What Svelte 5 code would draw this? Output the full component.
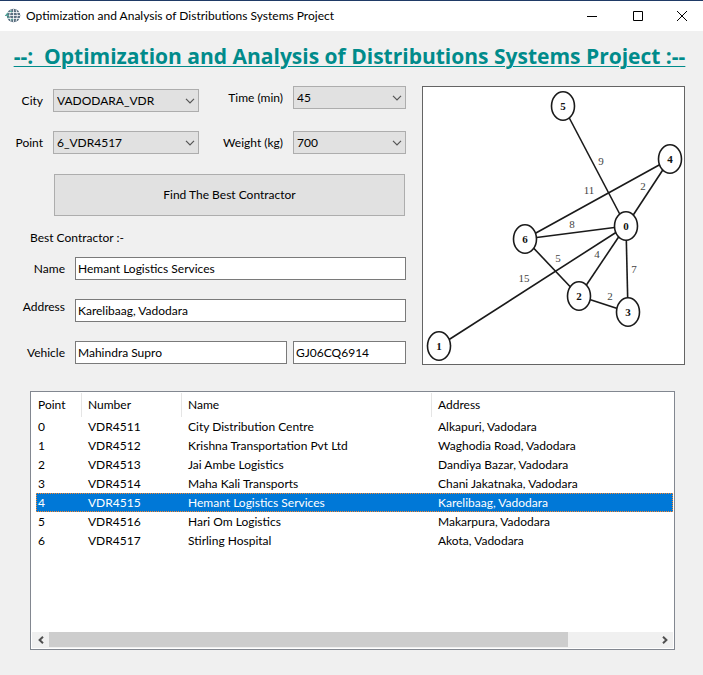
<script>
  const title = 'Optimization and Analysis of Distributions Systems Project';

  let city = $state('VADODARA_VDR');
  let point = $state('6_VDR4517');
  let time = $state('45');
  let weight = $state('700');
  let selected = $state(4);

  const points = [
    { number: 'VDR4511', name: 'City Distribution Centre', address: 'Alkapuri, Vadodara' },
    { number: 'VDR4512', name: 'Krishna Transportation Pvt Ltd', address: 'Waghodia Road, Vadodara' },
    { number: 'VDR4513', name: 'Jai Ambe Logistics', address: 'Dandiya Bazar, Vadodara' },
    { number: 'VDR4514', name: 'Maha Kali Transports', address: 'Chani Jakatnaka, Vadodara' },
    { number: 'VDR4515', name: 'Hemant Logistics Services', address: 'Karelibaag, Vadodara' },
    { number: 'VDR4516', name: 'Hari Om Logistics', address: 'Makarpura, Vadodara' },
    { number: 'VDR4517', name: 'Stirling Hospital', address: 'Akota, Vadodara' }
  ];

  // Node centres, indexed by point number
  const nodes = [
    [203, 139], [16, 259], [156, 209], [205, 225], [247, 72], [140, 19], [102, 152]
  ];

  // from, to, distance, label x, label y
  const edges = [
    [5, 0, 9, 178, 74],
    [4, 6, 11, 166, 103],
    [4, 0, 2, 220, 99],
    [6, 0, 8, 149, 137],
    [6, 2, 5, 135, 171],
    [0, 2, 4, 174, 167],
    [0, 1, 15, 101, 191],
    [2, 3, 2, 187, 209],
    [0, 3, 7, 211, 182]
  ];
</script>

{#snippet chevron()}
  <svg class="chevron" width="10" height="6" viewBox="0 0 10 6" aria-hidden="true">
    <path d="M1 0.8 L5 4.8 L9 0.8" fill="none" stroke="#555" stroke-width="1.2" />
  </svg>
{/snippet}

<div class="window">
  <header class="titlebar">
    <svg class="logo" width="16" height="16" viewBox="0 0 16 16" aria-hidden="true">
      <circle cx="8.5" cy="7.5" r="6.8" fill="#5b6f80" />
      <path d="M8.5 1v13M2 4.5h13M2 7.5h13M2 10.5h13M6 1.5q-3 6 0 12M11 1.5q3 6 0 12" fill="none" stroke="#fff" stroke-width="0.8" />
      <path d="M0 7.5h4M1 7l2-2M2.5 10l2-1M5 3l2 1M6 12l2-1" fill="none" stroke="#57a79b" stroke-width="1.1" />
    </svg>
    <span class="caption">{title}</span>
    <button class="ctl" aria-label="Minimize">
      <svg width="10" height="10" viewBox="0 0 10 10"><path d="M0 5.5h10" stroke="#000" /></svg>
    </button>
    <button class="ctl" aria-label="Maximize">
      <svg width="10" height="10" viewBox="0 0 10 10"><path d="M0.5 0.5h9v9h-9z" fill="none" stroke="#000" /></svg>
    </button>
    <button class="ctl" aria-label="Close">
      <svg width="10" height="10" viewBox="0 0 10 10"><path d="M0 0l10 10M10 0L0 10" stroke="#000" /></svg>
    </button>
  </header>

  <h1>--:&nbsp; {title} :--</h1>

  <main>
    <div class="top">
      <form onsubmit={(e) => e.preventDefault()}>
        <div class="choices">
          <div class="column main-column">
            <div class="field">
              <label for="city">City</label>
              <span class="select">
                <select id="city" bind:value={city}><option>VADODARA_VDR</option></select>
                {@render chevron()}
              </span>
            </div>
            <div class="field">
              <label for="point">Point</label>
              <span class="select">
                <select id="point" bind:value={point}>
                  {#each points as p, i}<option>{i}_{p.number}</option>{/each}
                </select>
                {@render chevron()}
              </span>
            </div>
          </div>
          <div class="column side-column">
            <div class="field">
              <label for="time">Time (min)</label>
              <span class="select">
                <select id="time" bind:value={time}><option>45</option></select>
                {@render chevron()}
              </span>
            </div>
            <div class="field">
              <label for="weight">Weight (kg)</label>
              <span class="select">
                <select id="weight" bind:value={weight}><option>700</option></select>
                {@render chevron()}
              </span>
            </div>
          </div>
        </div>

        <button class="find">Find The Best Contractor</button>

        <h2>Best Contractor :-</h2>
        <div class="results">
          <div class="result">
            <label for="name">Name</label>
            <input id="name" value="Hemant Logistics Services" />
          </div>
          <div class="result raised">
            <label for="address">Address</label>
            <input id="address" value="Karelibaag, Vadodara" />
          </div>
          <div class="result">
            <label for="vehicle">Vehicle</label>
            <input id="vehicle" value="Mahindra Supro" />
            <input class="plate" aria-label="Vehicle number" value="GJ06CQ6914" />
          </div>
        </div>
      </form>

      <div class="graph">
        <svg viewBox="0 0 261 277" role="img" aria-label="Distances between points">
          {#each edges as [from, to]}
            <line x1={nodes[from][0]} y1={nodes[from][1]} x2={nodes[to][0]} y2={nodes[to][1]} />
          {/each}
          {#each edges as [, , distance, x, y]}
            <text class="distance" {x} y={y + 4}>{distance}</text>
          {/each}
          {#each nodes as [x, y], i}
            <ellipse cx={x} cy={y} rx="11.5" ry="14.3" />
            <text class="node" {x} y={y + 4}>{i}</text>
          {/each}
        </svg>
      </div>
    </div>

    <div class="list">
      <table>
        <colgroup>
          <col class="c-point" /><col class="c-number" /><col class="c-name" /><col />
        </colgroup>
        <thead>
          <tr><th>Point</th><th>Number</th><th>Name</th><th>Address</th></tr>
        </thead>
        <tbody>
          {#each points as p, i}
            <tr class:selected={selected === i} onclick={() => (selected = i)}>
              <td>{i}</td><td>{p.number}</td><td>{p.name}</td><td>{p.address}</td>
            </tr>
          {/each}
        </tbody>
      </table>
      <div class="scrollbar">
        <button aria-label="Scroll left">
          <svg width="6" height="8" viewBox="0 0 6 8"><path d="M5 0.8L1.6 4L5 7.2" fill="none" stroke="#505050" stroke-width="2" /></svg>
        </button>
        <div class="track"><div class="thumb"></div></div>
        <button aria-label="Scroll right">
          <svg width="6" height="8" viewBox="0 0 6 8"><path d="M1 0.8L4.4 4L1 7.2" fill="none" stroke="#505050" stroke-width="2" /></svg>
        </button>
      </div>
    </div>
  </main>
</div>

<style>
  :global(body) {
    margin: 0;
    background: #f0f0f0;
  }

  .window {
    box-sizing: border-box;
    min-height: 100vh;
    display: flex;
    flex-direction: column;
    border-top: 1px solid #1f3a66;
    background: #f0f0f0;
    color: #000;
    font: 12px/16px Lato, 'Open Sans', sans-serif;
  }

  button,
  input,
  select {
    box-sizing: border-box;
    margin: 0;
    border-radius: 0;
    color: inherit;
    font: inherit;
  }

  .titlebar {
    display: flex;
    align-items: center;
    height: 30px;
    padding-left: 5px;
    background: #fff;
  }

  .caption {
    flex: 1;
    min-width: 0;
    margin-left: 5px;
    overflow: hidden;
    white-space: nowrap;
  }

  .ctl {
    display: flex;
    align-items: center;
    justify-content: center;
    width: 46px;
    height: 30px;
    padding: 0;
    border: 0;
    background: none;
  }

  .ctl:last-child {
    width: 42px;
  }

  h1 {
    margin: 9px 0 0;
    padding-right: 4px;
    color: #008b8b;
    font-family: 'Open Sans', sans-serif;
    font-size: 21px;
    font-weight: 700;
    line-height: 32px;
    text-align: center;
    text-decoration: underline;
    text-decoration-thickness: 1px;
    text-underline-offset: 2px;
    white-space: nowrap;
  }

  main {
    flex: 1;
    display: flex;
    flex-direction: column;
    padding: 14px 18px 25px 12px;
  }

  .top {
    display: grid;
    grid-template-columns: minmax(0, 1fr) 263px;
    gap: 16px;
  }

  .choices {
    display: flex;
  }

  .column {
    display: flex;
    flex-direction: column;
    justify-content: space-between;
    height: 68px;
  }

  .main-column {
    flex: 1;
    box-sizing: border-box;
    padding-top: 3px;
  }

  .side-column {
    width: 207px;
  }

  .field {
    display: flex;
    align-items: center;
    gap: 10px;
  }

  .field label {
    text-align: right;
    white-space: nowrap;
  }

  .main-column label {
    width: 31px;
  }

  .side-column label {
    flex: 1;
  }

  .select {
    position: relative;
    display: flex;
  }

  .main-column .select {
    flex: 1;
  }

  .side-column .select {
    width: 113px;
  }

  select {
    appearance: none;
    width: 100%;
    height: 23px;
    padding: 0 20px 0 3px;
    border: 1px solid #adadad;
    background: #e1e1e1;
  }

  .chevron {
    position: absolute;
    top: 9px;
    right: 4px;
    pointer-events: none;
  }

  .find {
    display: block;
    width: calc(100% - 43px);
    height: 42px;
    margin: 20px 1px 0 42px;
    border: 1px solid #adadad;
    background: #e1e1e1;
  }

  h2 {
    margin: 14px 0 11px 18px;
    font-size: 12px;
    font-weight: 400;
    line-height: 16px;
  }

  .results {
    display: flex;
    flex-direction: column;
    gap: 19px;
  }

  .result {
    display: flex;
    align-items: center;
  }

  .result.raised {
    align-items: flex-start;
  }

  .result label {
    width: 53px;
    margin-right: 10px;
    text-align: right;
  }

  .result input {
    flex: 1;
    min-width: 0;
    height: 23px;
    padding: 0 2px;
    border: 1px solid #7a7a7a;
    background: #fff;
  }

  .result .plate {
    flex: 0 0 113px;
    margin-left: 6px;
  }

  .graph {
    display: flex;
    border: 1px solid #646464;
    background: #fff;
  }

  .graph svg {
    width: 100%;
  }

  .graph line,
  .graph ellipse {
    fill: #fff;
    stroke: #1a1a1a;
    stroke-width: 1.6;
  }

  .graph text {
    font-family: 'Liberation Serif', serif;
    text-anchor: middle;
  }

  .distance {
    fill: #444;
    font-size: 11px;
  }

  .node {
    fill: #111;
    font-size: 11px;
    font-weight: 700;
  }

  .list {
    flex: 1;
    display: flex;
    flex-direction: column;
    justify-content: space-between;
    margin: 26px 10px 0 18px;
    padding: 1px;
    border: 1px solid #828790;
    background: #fff;
  }

  table {
    margin-left: 4px;
    table-layout: fixed;
    border-collapse: collapse;
  }

  .c-point {
    width: 46px;
  }

  .c-number {
    width: 100px;
  }

  .c-name {
    width: 250px;
  }

  th,
  td {
    padding: 0 0 0 6px;
    font-weight: 400;
    text-align: left;
    white-space: nowrap;
  }

  th {
    height: 24px;
    box-shadow: inset -1px 0 #e5e5e5;
  }

  th:last-child {
    box-shadow: none;
  }

  td {
    height: 19px;
    line-height: 19px;
  }

  th:first-child,
  td:first-child {
    padding-left: 2px;
  }

  .selected {
    background: #0078d7;
    color: #fff;
    outline: 1px dotted #ff8728;
    outline-offset: -1px;
  }

  .scrollbar {
    display: flex;
    height: 16px;
    background: #f0f0f0;
  }

  .scrollbar button {
    display: flex;
    align-items: center;
    justify-content: center;
    width: 17px;
    padding: 0;
    border: 0;
    background: none;
  }

  .track {
    flex: 1;
  }

  .thumb {
    width: 85.5%;
    height: 15px;
    background: #cdcdcd;
  }
</style>
